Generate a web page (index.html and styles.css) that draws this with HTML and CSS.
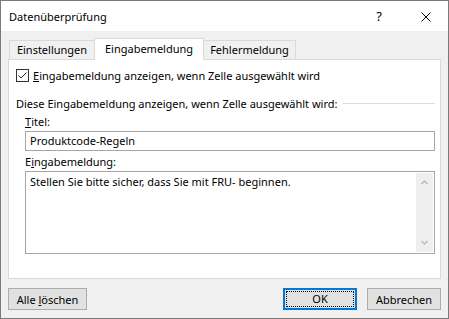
FILE: index.html
```html
<!DOCTYPE html>
<html lang="de">
<head>
  <meta charset="UTF-8">
  <title>Datenüberprüfung</title>
  <link rel="stylesheet" href="styles.css">
</head>
<body>

<div class="window">
  <div class="titlebar">
    <span class="title">Datenüberprüfung</span>
    <span class="help">?</span>
    <span class="close">
      <svg width="10" height="10" viewBox="0 0 10 10"><path d="M0.5 0.5 L9.5 9.5 M9.5 0.5 L0.5 9.5" stroke="#000" stroke-width="1" fill="none"/></svg>
    </span>
  </div>

  <div class="content">
    <div class="tabs">
      <div class="tab tab-first">Einstellungen</div>
      <div class="tab tab-active">Eingabemeldung</div>
      <div class="tab tab-last">Fehlermeldung</div>
    </div>

    <div class="panel">
      <div class="check-row">
        <span class="checkbox">
          <svg width="11" height="11" viewBox="0 0 11 11"><path d="M1.5 5.5 L4 8 L9.5 2.5" stroke="#333" stroke-width="1" fill="none"/></svg>
        </span>
        <span><u>E</u>ingabemeldung anzeigen, wenn Zelle ausgewählt wird</span>
      </div>

      <div class="group-header">
        <span>Diese Eingabemeldung anzeigen, wenn Zelle ausgewählt wird:</span>
        <span class="rule"></span>
      </div>

      <div class="fields">
        <div class="label"><u>T</u>itel:</div>
        <div class="textbox">Produktcode-Regeln</div>
        <div class="label label-message">E<u>i</u>ngabemeldung:</div>
        <div class="textarea">
          <div class="textarea-text">Stellen Sie bitte sicher, dass Sie mit FRU- beginnen.</div>
          <div class="scrollbar">
            <svg width="7" height="5" viewBox="0 0 7 5"><path d="M0.5 4 L3.5 1 L6.5 4" stroke="#b4b4b4" stroke-width="1.2" fill="none"/></svg>
            <svg width="7" height="5" viewBox="0 0 7 5"><path d="M0.5 1 L3.5 4 L6.5 1" stroke="#b4b4b4" stroke-width="1.2" fill="none"/></svg>
          </div>
        </div>
      </div>
    </div>

    <div class="buttons">
      <button class="btn btn-clear">Alle <u>l</u>öschen</button>
      <span class="spacer"></span>
      <button class="btn btn-ok"><span class="focus">OK</span></button>
      <button class="btn btn-cancel">Abbrechen</button>
    </div>
  </div>
</div>

</body>
</html>
```

FILE: styles.css
```css
* {
  box-sizing: border-box;
}

body {
  margin: 0;
  padding: 0;
  background-color: #ffffff;
  font-family: 'Noto Sans', 'Open Sans', sans-serif;
  font-size: 11px;
  color: #000000;
}

.window {
  width: 449px;
  height: 319px;
  border: 1px solid #7a7a7a;
  display: flex;
  flex-direction: column;
  background-color: #f0f0f0;
}

.titlebar {
  height: 30px;
  background-color: #ffffff;
  display: flex;
  align-items: center;
}

.title {
  padding-left: 8px;
  flex: 1;
}

.help {
  width: 12px;
  font-size: 13px;
  text-align: center;
  margin-right: 36px;
  margin-top: -1px;
}

.close {
  display: flex;
  margin-right: 17px;
  margin-top: 1px;
}

.content {
  flex: 1;
  padding: 0 7px 8px;
  display: flex;
  flex-direction: column;
}

.tabs {
  display: flex;
  align-items: flex-end;
  margin-top: 7px;
  margin-left: 1px;
}

.tab {
  height: 19px;
  border: 1px solid #d9d9d9;
  border-bottom: none;
  text-align: center;
  line-height: 18px;
  white-space: nowrap;
}

.tab-first {
  width: 86px;
}

.tab-active {
  width: 110px;
  height: 22px;
  margin-left: -1px;
  margin-bottom: -1px;
  line-height: 20px;
  background-color: #ffffff;
  position: relative;
  z-index: 1;
}

.tab-last {
  width: 93px;
  margin-left: -1px;
}

.panel {
  height: 220px;
  background-color: #ffffff;
  border: 1px solid #d9d9d9;
  padding: 8px 5px 0 7px;
}

.check-row {
  display: flex;
  align-items: center;
  height: 15px;
  white-space: nowrap;
}

.checkbox {
  width: 13px;
  height: 13px;
  border: 1px solid #333333;
  display: flex;
  align-items: center;
  justify-content: center;
  margin-right: 4px;
}

.group-header {
  display: flex;
  align-items: center;
  height: 15px;
  margin-top: 13px;
  white-space: nowrap;
}

.rule {
  flex: 1;
  height: 1px;
  margin-left: 6px;
  background-color: #dcdcdc;
}

.fields {
  padding-left: 9px;
}

.label {
  height: 15px;
  line-height: 15px;
  margin-top: 3px;
}

.textbox {
  height: 20px;
  margin-top: 2px;
  border: 1px solid #a6a6a6;
  padding-left: 4px;
  line-height: 18px;
}

.textarea {
  height: 83px;
  margin-top: 2px;
  border: 1px solid #a6a6a6;
  display: flex;
  padding: 1px;
}

.textarea-text {
  flex: 1;
  padding: 1px 0 0 3px;
  line-height: 16px;
}

.scrollbar {
  width: 17px;
  background-color: #efefef;
  display: flex;
  flex-direction: column;
  justify-content: space-between;
  align-items: center;
  padding: 7px 0 7px;
}

.buttons {
  display: flex;
  margin-top: 9px;
}

.spacer {
  flex: 1;
}

.btn {
  height: 22px;
  padding: 0;
  border: 1px solid #adadad;
  background-color: #e1e1e1;
  font-family: inherit;
  font-size: 11px;
  color: #000000;
}

.btn-clear {
  width: 79px;
}

.btn-ok {
  width: 74px;
  margin-right: 10px;
  border: 2px solid #0078d7;
  padding: 1px;
}

.focus {
  display: block;
  height: 100%;
  border: 1px dotted #000000;
  line-height: 14px;
}

.btn-cancel {
  width: 74px;
}
```
